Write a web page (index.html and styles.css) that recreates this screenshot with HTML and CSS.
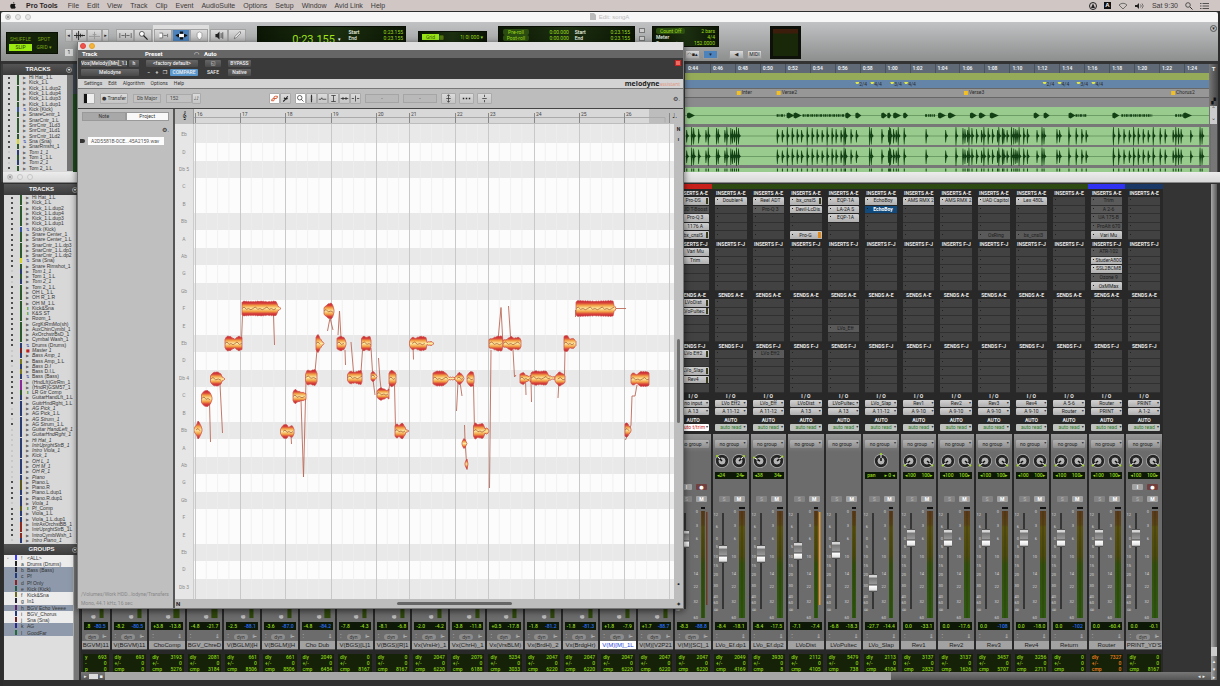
FILE: index.html
```html
<!DOCTYPE html>
<html lang="en">
<head>
<meta charset="utf-8">
<title>Pro Tools</title>
<link rel="stylesheet" href="styles.css">
</head>
<body>
<header class="menubar">
  <svg class="apple" viewBox="0 0 14 16" aria-label="Apple"><path d="M10 0c0 2-1.400 3.500-3 3.500C7 1.700 8.300.3 10 0zM7.200 4.600c.7 0 1.500-.8 2.900-.8 1.100 0 2.200.6 2.900 1.600-2.500 1.500-2.100 5 .5 6.100-.7 2-2 4-3.400 4-1.100 0-1.400-.7-2.800-.7s-1.800.7-2.900.7C2.500 15.500.5 11.800.5 8.900c0-3 1.900-5 4.100-5 1.100 0 2 .7 2.600.7z"/></svg>
  <nav class="menus"><b>Pro Tools</b><span>File</span><span>Edit</span><span>View</span><span>Track</span><span>Clip</span><span>Event</span><span>AudioSuite</span><span>Options</span><span>Setup</span><span>Window</span><span>Avid Link</span><span>Help</span></nav>
  <div class="status">
    <svg width="8" height="8" viewBox="0 0 8 8"><circle cx="4" cy="4" r="3.500" fill="none" stroke="#222"/><path d="M4 1.500 6 6H2z" fill="#222"/></svg>
    <span class="abox">A</span>
    <svg width="10" height="8" viewBox="0 0 10 8"><path d="M1 3q4-3.500 8 0L5 7z" fill="none" stroke="#555" stroke-width=".8"/></svg>
    <svg width="10" height="8" viewBox="0 0 10 8"><path d="M0 3h2l2-2v6L2 5H0z" fill="#222"/><path d="M5.500 2.500q1.500 1.500 0 3M7 1.500q2.500 2.500 0 5" fill="none" stroke="#555" stroke-width=".8"/></svg>
    <span>Sat 9:30</span>
    <svg width="8" height="8" viewBox="0 0 8 8"><circle cx="3" cy="3" r="2.300" fill="none" stroke="#333" stroke-width=".8"/><path d="m5 5 2.500 2.500" stroke="#333"/></svg>
    <svg width="9" height="8" viewBox="0 0 9 8"><path d="M2.500 1.500H9M2.500 4H9M2.500 6.500H9M0 1.500h1.500M0 4h1.500M0 6.500h1.500" stroke="#333" stroke-width=".8"/></svg>
  </div>
</header>

<main class="desktop">
  <section class="edit">
    <div class="titlebar white"><i class="dot x"></i><i class="dot"></i><i class="dot"></i><h1><svg width="6" height="7" viewBox="0 0 6 7"><path d="M0 0h4l2 2v5H0z" fill="#bbb"/></svg>Edit: songA</h1></div>
    <div class="toolbar">
      <div class="modes"><span>SHUFFLE</span><span>SPOT</span><span class="on">SLIP</span><span>GRID ▾</span></div>
      <div class="toolcol">
        <div class="tools">
          <button aria-label="Zoom out">◂</button><button aria-label="Audio zoom"><svg viewBox="0 0 12 12"><path d="M0 6h12M3 3v6M5 1v10M7 4v4M9 5v2" stroke="#222"/></svg></button><button aria-label="MIDI zoom"><svg viewBox="0 0 12 12"><path d="M0 7h12M6 2v8M4 5h4" stroke="#999"/></svg></button><button aria-label="Zoom in">▸</button>
        </div>
        <button class="mini">1</button>
      </div>
      <div class="tools big">
        <button aria-label="Trim view"><svg viewBox="0 0 16 12"><path d="M1 3v6M15 3v6M8 3v6M3 6h4M9 6h4" stroke="#555"/></svg></button>
        <button aria-label="Zoomer"><svg viewBox="0 0 16 12"><circle cx="6" cy="4" r="3" fill="#fff" stroke="#444"/><path d="m8 6 5 5" stroke="#222" stroke-width="1.500"/></svg></button>
      </div>
      <div class="tools big smart">
        <button aria-label="Trimmer"><svg viewBox="0 0 16 12"><path d="M3 3h4v6H3M13 4v4M8 6h4" stroke="#666" fill="#fff"/></svg></button>
        <button class="sel" aria-label="Selector"><svg viewBox="0 0 16 12"><path d="M1 6h14M4 4v4M7 1v10M9 1v10M12 4v4" stroke="#111" stroke-width="2"/><path d="M5 4h6v4H5z" fill="#fff"/></svg></button>
        <button aria-label="Grabber"><svg viewBox="0 0 16 12"><path d="M5 3q3-3 6 0v4l-2 4H7L5 7z" fill="#fff" stroke="#999"/></svg></button>
      </div>
      <div class="tools big">
        <button aria-label="Scrubber"><svg viewBox="0 0 16 12"><path d="M3 4h2l3-3v10L5 8H3z" fill="#222"/><path d="M10 3v6M12 2v8" stroke="#444"/></svg></button>
        <button aria-label="Pencil"><svg viewBox="0 0 16 12"><path d="m4 10 1-3 6-6 1 2-6 6z" fill="#fff" stroke="#666"/></svg></button>
      </div>
      <div class="lcd counter"><strong>0:23.155</strong><em>▾</em><div><b>Start</b><b>End</b></div><div class="r"><span>0:23.155</span><span>0:23.155</span></div></div>
      <div class="lcd gridbox"><span class="on">Grid</span><i>▥</i><span class="push">1| 0| 000 ▾</span></div>
      <div class="lcd roll"><div><span class="pill">Pre-roll</span><span class="pill">Post-roll</span></div><div class="r"><span>0:00.000</span><span>0:00.000</span><span>0:10.000</span></div><div><b>Start</b><b>End</b><b>Length</b></div><div class="r"><span>0:23.155</span><span>0:23.155</span><span>0:00.000</span></div></div>
      <div class="checks"><i></i><i></i></div>
      <div class="tempo">
        <div class="lcd meterbox"><div><span class="pill">Count Off</span><b>Meter</b><b>Tempo &nbsp; ♩▾</b></div><div class="r"><span>2 bars</span><span>4/4</span><span>152.0000</span></div></div>
        <div class="minis"><button aria-label="Metronome">◠▪▴</button><button class="sel" aria-label="MIDI merge">▾</button><button aria-label="Count">◀</button><button>MIDI</button></div>
      </div>
      <div class="vu"></div>
      <span class="round">▾</span>
    </div>
    <div class="editbody">
      <aside class="list-panel"><h2>TRACKS<i>▾</i></h2><ul class="tracks" id="edit-tracks"></ul></aside>
      <div class="sliver"></div>
      <div class="timeline">
        <div class="times" id="times"></div>
        <svg id="lanes" class="lanes" viewBox="684 73 526 99" preserveAspectRatio="none" role="img" aria-label="Timeline"></svg>
      </div>
      <div class="edge"><b>T</b><i>▞</i><span>⌃</span><span>⌄</span><u></u></div>
    </div>
  </section>

  <section class="mix">
    <div class="titlebar grey"><i class="dot x"></i><i class="dot"></i><i class="dot"></i></div>
    <div class="mixbody">
      <aside class="list-panel">
        <h2>TRACKS<i>▾</i></h2>
        <ul class="tracks" id="mix-tracks"></ul>
        <h2 class="second">GROUPS<i>▾</i></h2>
        <ul class="groups" id="groups"></ul>
      </aside>
      <div class="mixer">
        <div class="strips" id="strips"></div>
        <div class="hscroll"><span>▸</span><b></b><span>▪</span><div class="thumb"></div><span>◂</span><span>▸</span></div>
      </div>
      <div class="vscroll"><i></i><span>▴</span><span>▾</span><span>▸</span></div>
    </div>
  </section>

  <section class="melodyne">
    <div class="mtitle"><i class="dot red"></i><i class="dot yellow"></i></div>
    <div class="mhead"><b>Track</b><b>Preset</b><i>◠</i><b>Auto</b></div>
    <div class="mctrl">
      <div class="c1"><button>Vox(Melody)[Mn]_1.L</button><button>h</button><button class="wide">Melodyne</button></div>
      <div class="c2"><button class="wide">&lt;factory default&gt;</button><span>−</span><span>+</span><span>❐</span><button class="cmp">COMPARE</button></div>
      <div class="c3"><button aria-label="Automation">◱</button><span>SAFE</span></div>
      <div class="c3"><button>BYPASS</button><button>Native</button></div>
      <i class="redbox"></i>
    </div>
    <nav class="mmenu"><span>Settings</span><span>Edit</span><span>Algorithm</span><span>Options</span><span>Help</span><p><strong>melodyne</strong><em>assistant</em></p></nav>
    <div class="mtools">
      <button class="view" aria-label="Toggle list"><i></i></button>
      <button class="transfer">● Transfer</button>
      <span class="field key">Db Major</span>
      <span class="field bpm">152</span>
      <button class="small" aria-label="Tempo">♩♪</button>
      <div class="pair">
        <button class="act" aria-label="Link"><svg viewBox="0 0 12 12"><path d="M2 9q0-3 3-3h2M5 6h3q2 0 2-3H7q-2 0-2 3M2 9h3l1-3" fill="none" stroke="#d4603c" stroke-width="1.300"/></svg></button>
        <button aria-label="Unlink"><svg viewBox="0 0 12 12"><path d="m3 10 3-3 3-4M6 7l3-1M6 7 4 5" fill="none" stroke="#222" stroke-width="1.500"/></svg></button>
      </div>
      <div class="pair">
        <button class="act" aria-label="Main tool"><svg viewBox="0 0 12 12"><circle cx="5" cy="5" r="3" fill="none" stroke="#333"/><path d="m7 7 3 3" stroke="#333"/></svg></button>
        <button aria-label="Pitch"><svg viewBox="0 0 12 12"><path d="M6 1v10M5 4h2M5 7h2" stroke="#333" stroke-width="1.500"/></svg></button>
        <button aria-label="Vibrato"><svg viewBox="0 0 12 12"><path d="M1 7h3l1-2 1 2h5" fill="none" stroke="#333"/></svg></button>
        <button aria-label="Amplitude"><svg viewBox="0 0 12 12"><path d="M3 2h6M6 2v8M3 10h6" stroke="#333"/></svg></button>
        <button aria-label="Time"><svg viewBox="0 0 12 12"><path d="M1 6h10M4 4v4M8 4v4" stroke="#222"/></svg></button>
        <button aria-label="Separate"><svg viewBox="0 0 12 12"><path d="M1 6h3M8 6h3M6 2v8" stroke="#333"/></svg></button>
      </div>
      <span class="field slot">-</span><span class="field slot">-</span>
      <button class="mac" aria-label="Correct pitch"><svg viewBox="0 0 12 12"><path d="M6 1v10M3 6h6M4 3l2-2 2 2M4 9l2 2 2-2" fill="none" stroke="#333"/></svg></button>
      <button class="mac" aria-label="Quantize time"><svg viewBox="0 0 12 12"><path d="M1 6h2M5 6h2M9 6h2" stroke="#222" stroke-width="2"/></svg></button>
      <button class="mac" aria-label="Level"><svg viewBox="0 0 12 12"><path d="M6 1v3M3 6h6M6 8v3" stroke="#333"/></svg></button>
      <span class="gear">⚙.</span>
    </div>
    <div class="mbody">
      <aside class="mside">
        <div class="tabs"><button>Note</button><button class="act">Project</button></div>
        <span class="sgear">⚙.</span>
        <div class="file"><i></i><span>A2D5581B-0CE...45A2159.wav</span></div>
        <footer><p>/Volumes/Work HDD...lodyne/Transfers</p><p>Mono, 44.1 kHz, 16 sec</p></footer>
      </aside>
      <div class="meditor">
        <div class="clef">𝄞</div>
        <svg class="ruler" viewBox="194 110 480 14" id="ruler" role="img" aria-label="Bars"></svg>
        <div class="rtop">♩.</div>
        <div class="pitches" id="pitches"></div>
        <div class="canvas"><div class="bands" id="bands"></div><svg id="notes" viewBox="194 124 480 475" role="img" aria-label="Notes"></svg></div>
        <div class="mvs"><span>N</span><span>ı</span><i></i><b>•</b></div>
        <div class="mhs"><span>N</span><i></i><span>⌖</span></div>
      </div>
    </div>
  </section>
</main>
<script src="app.js"></script>
</body>
</html>
```
FILE: styles.css
```css
* { box-sizing: border-box; }
body { margin: 0; height: 100vh; display: flex; flex-direction: column; overflow: hidden; background: #2d2d2e; font: 5px/1 "Roboto", "DejaVu Sans", sans-serif; color: #222; }
button { font: inherit; padding: 0; margin: 0; border: 0; color: inherit; white-space: nowrap; overflow: hidden; line-height: 1; }
h1, h2, p, ul { margin: 0; padding: 0; list-style: none; font-size: inherit; }
i, em { font-style: normal; }
svg { display: block; flex: none; }

.menubar { flex: none; height: 11px; display: flex; align-items: center; background: #d0c7c5; font: 7px/10px "Liberation Sans", sans-serif; color: #3c3838; padding: 0 11px 0 10px; }
.apple { width: 6px; height: 7px; fill: #151515; margin-right: 10px; }
.menus { display: flex; gap: 8px; flex: 1; }
.menus b { color: #2a2626; margin-right: 2px; }
.status { display: flex; align-items: center; gap: 7px; }
.abox { background: #111; color: #fff; font: bold 6px/7px "Liberation Sans", sans-serif; width: 7px; text-align: center; }

.desktop { position: relative; flex: 1; min-height: 0; }
.titlebar { height: 10px; display: flex; align-items: center; gap: 4px; padding: 0 4px; flex: none; position: relative; }
.white { background: #f7f7f7; border-radius: 2px 2px 0 0; }
.grey { background: linear-gradient(#ececec, #d9d9d9); height: 11px; border-bottom: 1px solid #888; }
.titlebar h1 { flex: 1; display: flex; justify-content: center; gap: 3px; font: 6px/8px "Liberation Sans", sans-serif; color: #bdbdbd; margin-right: 30px; }
.dot { width: 6px; height: 6px; border-radius: 50%; background: #e6e6e6; border: 1px solid #c6c6c6; flex: none; }
.dot.x { box-shadow: inset 0 0 0 1px #ddd; background: #888; }
.dot.red { background: #f0554c; border-color: #e0443c; }
.dot.yellow { background: #f5b63c; border-color: #e3a22c; }

/* Edit window */
.edit { position: absolute; left: 1px; right: 2px; top: 1px; height: 170px; display: flex; flex-direction: column; background: #3a3c3e; }
.toolbar { height: 41px; flex: none; display: flex; align-items: flex-start; padding: 3px 1px 0 5px; background: linear-gradient(#c0c2c3, #8d8f8f); border-bottom: 2px solid #333; }
.modes { width: 52px; height: 22px; margin: 7px 7px 0 0; background: #15220a; border: 1px solid #0b1004; padding: 3px 2px; display: grid; grid-template-columns: 23px 1fr; gap: 1px; color: #79a512; text-align: center; line-height: 7px; }
.modes .on { background: #9bea12; color: #263c05; }
.toolcol { margin-right: 7px; }
.tools { display: flex; margin-top: 4px; }
.tools button { height: 13px; background: linear-gradient(#dcdcdc, #b4b4b4); border: 1px solid #a2a2a2; width: 15px; display: grid; place-items: center; }
.tools button:first-child:not([aria-label="Trimmer"]), .tools button[aria-label="Zoom in"] { width: 7px; }
.tools svg { width: 13px; height: 11px; }
.tools.big button, .tools.big button:first-child { width: 18px; }
.tools.smart { background: #dedede; margin: 0 1px; padding: 4px 1px 3px; }
.tools .sel, .minis .sel { background: #4c83bd; }
.mini { width: 8px; height: 7px; background: #d4d4d4; margin-top: 7px; }
.lcd { background: linear-gradient(90deg, #0c1605, #1c3010 50%, #0c1605); border: 1px solid #0a0f06; color: #9ede18; display: flex; font-size: 5px; line-height: 6px; padding: 2px 4px; flex: none; }
.lcd b { color: #ecf5e4; font-weight: 500; display: block; white-space: nowrap; }
.lcd span { display: block; white-space: nowrap; }
.lcd .r { text-align: right; margin-left: auto; }
.lcd .pill { background: #2c4d10; border-radius: 2px; padding: 0 4px; text-align: center; }
.counter { width: 149px; height: 24px; margin: 1px 12px 0 11px; align-items: flex-start; padding-right: 2px; }
.counter strong { flex: none; width: 73px; text-align: right; font: 11px/18px "Roboto", sans-serif; color: #a5e61c; margin-top: 2px; }
.counter em { color: #fff; margin: 7px 8px 0 3px; }
.gridbox { width: 69px; height: 15px; margin: 6px 11px 0 0; padding: 2px 3px; }
.gridbox .on { background: #98e616; color: #3e6510; width: 17px; height: 6px; text-align: center; }
.gridbox .push { margin-left: auto; }
.roll { width: 137px; height: 24px; margin: 1px 4px 0 0; overflow: hidden; gap: 6px; }
.roll .pill { width: 26px; padding: 0 2px; }
.checks i { display: block; width: 6px; height: 5px; border: 1px solid #777; background: #ccc; margin-top: 3px; }
.tempo { margin: 1px 11px 0 7px; width: 107px; flex: none; }
.meterbox { width: 67px; height: 21px; padding: 1px 3px; overflow: hidden; }
.minis { display: flex; gap: 3px; margin: 3px 0 0 33px; }
.minis button { width: 15px; height: 9px; background: linear-gradient(#dadada, #aaa); border: 1px solid #999; flex: none; }
.minis button:nth-child(3) { margin-left: 8px; }
.vu { width: 31px; height: 33px; margin-top: 1px; background: linear-gradient(#3c1d0c 4px, #182808 5px); border: 3px solid #0e1109; flex: none; }
.round { margin-left: auto; width: 7px; height: 7px; border: 1px solid #555; border-radius: 50%; text-align: center; line-height: 5px; }
.editbody { flex: 1; display: flex; min-height: 0; padding-left: 2px; border-top: 1px solid #333; }

.list-panel { width: 70px; flex: none; display: flex; flex-direction: column; background: #d6d6d6; overflow: hidden; }
.list-panel h2 { flex: none; height: 11px; background: linear-gradient(#555, #3c3c3c); color: #f3f3f3; font: bold 6px/11px "Liberation Sans", sans-serif; text-align: center; position: relative; }
.list-panel h2 i { position: absolute; right: 1px; top: 3px; width: 6px; height: 6px; border: 1px solid #999; border-radius: 50%; font-size: 4px; line-height: 4px; }
.tracks { background: #d8d8d8; border-right: 6px solid #757575; display: grid; }
.tracks li { display: grid; grid-template-columns: 10px 6px 6px 1fr; align-items: center; padding-left: 4px; font: 5px/5px "Liberation Sans", sans-serif; color: #333; white-space: nowrap; overflow: hidden; }
.tracks li i { width: 2px; height: 2px; border-radius: 50%; background: #222; margin-left: 1px; }
.tracks li u { width: 2px; height: 5px; }
.tracks li s { text-decoration: none; font: 4px/5px "DejaVu Sans", sans-serif; }
.tracks .off { font-style: italic; }
.tracks .off i { background: #c2c2c2; }
#edit-tracks { grid-auto-rows: calc(100% / 18); height: 96px; }
.sliver { width: 5px; background: #1d4a1c; border-top: 30px solid #39424c; }
.timeline { flex: 1; min-width: 0; display: flex; flex-direction: column; margin-left: 607px; }
.times { height: 9px; display: grid; grid-template-columns: repeat(21, 1fr); background: #606a76; color: #e8ecf0; font: bold 5px/9px "Roboto", sans-serif; }
.times span { border-left: 1px solid #4a525c; padding-left: 2px; }
.lanes { width: 100%; height: 99px; }
.lanes text { font: 5px "Roboto", sans-serif; fill: #2b2b2b; }
.edge { width: 9px; background: linear-gradient(90deg, #777, #444); color: #eee; display: flex; flex-direction: column; align-items: center; font-size: 6px; padding-top: 2px; }
.edge i { margin: 26px 0 2px; color: #111; }
.edge span { background: #ccc; color: #444; width: 7px; height: 9px; text-align: center; }
.edge u { flex: 1; width: 6px; background: #777; }

/* Mix window */
.mix { position: absolute; left: 3px; right: 0; top: 161px; bottom: 0; display: flex; flex-direction: column; background: #303030; padding-bottom: 6px; }
.mixbody { flex: 1; min-height: 0; display: flex; padding-top: 1px; }
.mix .list-panel { width: 75px; margin: 0 2px 0 1px; }
.mix .tracks { height: 348px; grid-auto-rows: 1fr; border-right: 3px solid #888; padding-left: 2px; }
.list-panel .second { margin-top: 1px; }
.groups { flex: 1; background: linear-gradient(90deg, #dedede 69px, #777 70px); }
.groups li { height: 6px; margin: 0 6px 0 0; display: grid; grid-template-columns: 4px 5px 8px 1fr; gap: 1px; padding-left: 3px; font: 5px/6px "Liberation Sans", sans-serif; color: #333; background: #ececec; white-space: nowrap; overflow: hidden; }
.groups li.sel { background: #8e9aab; }
.groups li:nth-child(4n) { height: 7px; }
.groups li u { width: 2px; height: 5px; justify-self: end; }
.groups li b { font-weight: normal; padding-left: 3px; }
.mixer { flex: 1; min-width: 0; display: flex; flex-direction: column; overflow: hidden; background: #343434; }
.strips { flex: 1; min-height: 0; display: grid; grid-template-columns: repeat(29, minmax(0, 1fr)); margin: 0 48px 0 -8px; background: #282828; }
.hscroll { height: 8px; flex: none; background: linear-gradient(#777, #555); display: flex; align-items: center; gap: 2px; color: #eee; padding: 0 6px 0 3px; }
.hscroll b { width: 9px; height: 5px; background: #ddd; }
.hscroll .thumb { width: 786px; flex: none; height: 8px; background: #a6a6a6; margin-right: auto; }
.vscroll { width: 6px; margin-right: 3px; background: linear-gradient(90deg, #a9a9a9, #5a5a5a); display: flex; flex-direction: column; justify-content: flex-end; align-items: center; color: #eee; gap: 3px; }
.vscroll i { width: 6px; height: 9px; background: #ccc; }
.strip { display: flex; flex-direction: column; justify-content: flex-end; padding: 0 1px; min-width: 0; overflow: hidden; text-align: center; }
.strip.first { padding-left: 9px; }
.color { height: 5px; margin: 0 -1px; flex: none; }
.block { height: 51px; display: grid; grid-template-rows: 8px repeat(5, minmax(0, 1fr)); padding: 0 2px; }
.cap { color: #e9e9e9; font-weight: 700; font-size: 5px; line-height: 8px; white-space: nowrap; margin: 0 -3px; }
.slot { display: flex; align-items: center; gap: 1px; background: #424242; border: 1px solid #303030; border-width: 0 0 1px; color: #1c1c1c; text-align: center; }
.slot::before { content: ""; width: 1px; height: 1px; background: #202020; margin: -2px 0 0 2px; flex: none; }
.slot span { flex: 1; overflow: hidden; }
.slot.on { background: linear-gradient(#cfcfcf, #b0b0b0); border-radius: 1px; border: 1px solid #242424; border-width: 0 0 1px; }
.slot.dim { background: #5a5a5a; }
.slot.blue { background: #124a7c; color: #fff; font-weight: 700; }
.slot em { width: 2px; height: 6px; background: #3a3a1c; margin-right: 1px; }
.slot em.hot { background: #e08a1c; width: 3px; }
.io { padding: 0 2px; }
.io .cap { line-height: 7px; }
.io .auto-cap { line-height: 8px; }
.io button { display: block; width: 100%; height: 7px; margin-bottom: 1px; background: linear-gradient(#d2d2d2, #aeaeae); border-radius: 1px; position: relative; }
.io button.auto { color: #2f7a2a; background: #bfc3bf; }
.io button.touch { color: #d02828; background: #fff; }
.caret::after { content: "▾"; position: absolute; right: 1px; top: 1px; font-size: 4px; line-height: 4px; color: #333; }
.body { background: #6c6c6c; margin-top: 2px; flex: none; }
.grp { height: 18px; padding: 6px 2px 4px; background: linear-gradient(#979797, #6c6c6c); }
.grp button { width: 100%; height: 8px; background: linear-gradient(#b2b2b2, #8f8f8f); border-radius: 1px; position: relative; padding-right: 3px; }
.pan { height: 28px; }
.knobs { height: 20px; display: flex; justify-content: center; gap: 1px; padding-top: 1px; }
.knobs svg { width: 16px; height: 16px; }
.read { height: 7px; margin: 0 2px; background: #0d1806; color: #97dc1a; display: flex; justify-content: space-between; padding: 0 2px; line-height: 7px; font-weight: 500; white-space: nowrap; }
.rec, .sm { display: flex; justify-content: flex-end; align-items: center; gap: 4px; padding-right: 4px; }
.rec { height: 14px; }
.sm { height: 10px; }
.rec button, .sm button { width: 11px; height: 6px; border-radius: 1px; background: #a2a2a2; color: #fff; font-weight: 700; }
.rec button:last-child { background: #71403e; }
.sm button:first-child { background: #838383; color: #aaa; }
.fader { position: relative; height: 116px; }
.fader svg { width: 35px; height: 116px; }
.fader text, .tail text { font: 4px "Roboto", sans-serif; fill: #d6d6d6; }
.fader input { position: absolute; left: 6px; top: 9px; width: 8px; height: 96px; margin: 0; appearance: none; -webkit-appearance: none; background: linear-gradient(90deg, transparent 3px, #353535 3px, #353535 5px, transparent 5px); writing-mode: vertical-lr; direction: rtl; }
.fader input::-webkit-slider-thumb { -webkit-appearance: none; width: 8px; height: 18px; border: 1px solid #555; border-width: 1px 0; background: linear-gradient(#d5d5d5 2px, #777 3px, #999 9px, #444 10px, #fff 11px, #e2e2e2 15px, #888); }
.tail svg { width: 100%; height: 11px; }
.tail.body { margin: 0; }
.vol { height: 12px; padding-top: 2px; }
.vol .read { height: 8px; line-height: 8px; }
.vol .bl { color: #2672ff; }
.dyn { height: 9px; display: flex; align-items: center; justify-content: space-between; padding: 0 3px; color: #ddd; }
.dyn b { background: #8d8d8d; color: #333; font-weight: 400; width: 14px; height: 6px; line-height: 6px; border-radius: 3px; font-size: 5px; }
.name { height: 9px; background: #a2a2a2; color: #1c1c1c; font: 6px/9px "Liberation Sans", sans-serif; white-space: nowrap; overflow: hidden; border-bottom: 1px solid #555; }
.name.sel { background: #fff; color: #2745e0; }
.dly { flex: none; height: 18px; margin: 4px 1px 0; padding: 0 2px; background: #152208; color: #8ed01a; display: grid; grid-template-columns: auto 1fr; line-height: 6px; text-align: left; font-weight: 500; }
.dly span:nth-child(even) { text-align: right; }
.dly.hot { color: #f08020; }

/* Melodyne plug-in window */
.melodyne { position: absolute; left: 77px; top: 31px; width: 607px; height: 567px; display: flex; flex-direction: column; background: #bdbdbd; box-shadow: 0 2px 7px rgba(0,0,0,.6); border: 1px solid #777; border-top: 0; overflow: hidden; }
.mtitle { height: 8px; background: #e0e0e0; display: flex; gap: 3px; padding: 1px 2px; flex: none; }
.mhead { height: 8px; flex: none; background: #666; color: #fff; display: grid; grid-template-columns: 63px 49px 10px 1fr; padding-left: 4px; font-size: 6px; line-height: 8px; }
.mctrl { height: 21px; flex: none; background: #3a3a3a; color: #eee; display: flex; gap: 7px; padding: 2px 3px; position: relative; font-weight: 500; }
.mctrl button { height: 7px; background: linear-gradient(#666, #494949); border-radius: 1px; }
.mctrl > div { display: flex; flex-wrap: wrap; gap: 2px; align-content: flex-start; align-items: center; }
.c1 { width: 58px; }
.c1 button:first-child { width: 46px; }
.c1 button:nth-child(2) { width: 10px; }
.mctrl .wide { width: 100%; }
.c2 { width: 52px; }
.c2 span { width: 6px; text-align: center; }
.mctrl .cmp { flex: 1; background: #5a97cc; }
.mctrl .c3 { width: 16px; flex-direction: column; flex-wrap: nowrap; align-items: stretch; text-align: center; }
.c3 span { line-height: 7px; }
.mctrl .c3 + .c3 { width: 23px; }
.redbox { position: absolute; right: 2px; top: 2px; width: 6px; height: 6px; background: #f16a62; border: 1px solid #c22; }
.mmenu { height: 10px; flex: none; background: #d3d3d3; display: flex; gap: 6px; align-items: center; padding: 0 3px 0 6px; font: 5px/9px "Roboto", sans-serif; color: #333; border-bottom: 1px solid #777; }
.mmenu p { margin-left: auto; display: flex; }
.mmenu strong { font: bold 7px/9px "Open Sans", sans-serif; color: #222; }
.mmenu em { font: 5px/10px "Open Sans", sans-serif; color: #e0917a; }
.mtools { height: 20px; flex: none; display: flex; align-items: center; padding: 0 3px 0 5px; border-bottom: 1px solid #444; color: #333; }
.mtools button { height: 11px; background: linear-gradient(#dcdcdc, #c4c4c4); border: 1px solid #aaa; border-radius: 1px; display: grid; place-items: center; flex: none; }
.mtools svg { width: 9px; height: 9px; }
.mtools .view { width: 12px; background: linear-gradient(90deg, #111 3px, #eee 3px); }
.mtools .transfer { width: 28px; margin: 0 5px; font-size: 5px; }
.field { border: 1px solid #aaa; height: 9px; line-height: 7px; background: #c2c2c2; font-size: 5px; color: #444; padding: 0 3px; flex: none; }
.key { width: 28px; margin-right: 5px; white-space: nowrap; }
.bpm { width: 26px; }
.mtools .small { width: 9px; margin-right: 68px; }
.pair { display: flex; margin-right: 4px; }
.pair button { width: 11px; }
.mtools .act { background: #fff; }
.field.slot { width: 34px; margin-right: 4px; display: block; background: #b9b9b9; border: 1px solid #a5a5a5; }
.field.slot::before { display: none; }
.mtools .mac { width: 15px; margin-right: 3px; }
.gear { margin-left: auto; font-size: 6px; }
.mbody { flex: 1; display: flex; min-height: 0; }
.mside { width: 97px; flex: none; border-right: 2px solid #555; background: #bfbfbf; display: flex; flex-direction: column; padding-top: 3px; }
.tabs { display: flex; margin: 0 4px; }
.tabs button { flex: 1; height: 9px; background: #a8a8a8; border: 1px solid #999; color: #333; font-size: 5px; }
.tabs .act { background: #f8f8f8; }
.sgear { font-size: 6px; text-align: right; margin: 5px 4px 4px; line-height: 7px; }
.file { display: flex; align-items: center; gap: 4px; height: 8px; margin: 0 9px 0 2px; background: linear-gradient(90deg, transparent 8px, #fcfcfc 8px); color: #555; white-space: nowrap; }
.file i { width: 5px; height: 4px; background: #333; border-radius: 0 2px 2px 0; margin-right: 2px; }
.mside footer { margin-top: auto; padding: 0 2px 0 3px; font-size: 5px; line-height: 9px; color: #888; white-space: nowrap; }
.meditor { flex: 1; min-width: 0; display: grid; grid-template-columns: 19px minmax(0, 1fr) 9px; grid-template-rows: 15px minmax(0, 1fr) 9px; }
.clef { text-align: center; font-size: 8px; line-height: 14px; border-right: 1px solid #999; }
.ruler { width: 480px; height: 14px; background: #d8d8d8; }
.ruler text { font: 5px "Roboto", sans-serif; fill: #444; }
.rtop { font-size: 7px; line-height: 14px; margin-left: -2px; }
.pitches, .bands { display: grid; grid-template-rows: repeat(27, minmax(0, 1fr)); padding: 2px 0 3px; }
.pitches { background: #e6e6e6; border-right: 1px solid #ccc; }
.pitches span { display: grid; place-items: center; color: #8c8c8c; font-size: 5px; }
.canvas { display: grid; background: #e9e9e9; overflow: hidden; }
.canvas > * { grid-area: 1 / 1; }
.bands i { background: #fcfcfc; }
.bands i.k { background: #e9e9e9; }
#notes { width: 480px; height: 100%; }
.mvs { display: flex; flex-direction: column; align-items: center; gap: 5px; padding-top: 3px; font: bold 5px/5px "Roboto", sans-serif; }
.mvs i { width: 3px; height: 84px; border-radius: 2px; background: #6f6f6f; margin-top: 192px; }
.mvs b { margin-top: auto; padding-bottom: 12px; font-size: 8px; }
.mhs { grid-column: 1 / -1; display: flex; justify-content: space-between; align-items: center; padding: 0 3px 0 1px; font: bold 6px/6px "Roboto", "DejaVu Sans", sans-serif; }
.mhs i { width: 115px; height: 3px; border-radius: 2px; background: #666; margin-left: 51px; }
```
FILE: app.js
```js
const $ = id => document.getElementById(id);

/* Track lists. Prefix: . inactive, + aux, v VCA, m master; suffix after | is the colour. */
const trackNames = `Hi Hat_1.L;Kick_1.L;Kick_1.L.dup2;Kick_1.L.dup4;Kick_1.L.dup3;Kick_1.L.dup1;vKick (Kick)|#34559a;Snare Center_1;Snare Center_1.L;SnarCntr_1.L.dp3;SnarCntr_1.L.dp1;SnarCntr_1.L.dp2;vSna (Sna)|#d6d62a;Snare Rimshot_1;.Tom 1_1|#2a3c72;Tom 1_1.L;.Tom 2_1|#2a3c72;Tom 2_1.L;OH L_1.L;OH R_1.R;OH M_1.L;+Kick&Sna;+K&S ST;Room_1;GrgKtRmMo(sh);AuxChinCymbl_1;AxOrchstrBsD_1;Cymbal Wash_1;vDrums (Drums)|#2a3c72;mMaster 1|#7c2020;.Bass Amp_1|#2a3c72;Bass Amp_1.L|#7a7a20;.Bass D.I|#2a3c72;Bass D.I.L|#7a7a20;vBass (Bass)|#2a3c72;(HndLft)GtrRm_1|#8a2a9a;(HndR)GSM57_1|#8a2a9a;+LR Gtr Comp;GuitarHandLft_1.L|#2a3c72;GuitrHndRght_1.L|#2a3c72;.AG Pick_1|#2a3c72;AG Pick_1.L|#2a3c72;.AG Strum_1|#2a3c72;AG Strum_1.L|#2a3c72;.Guitar HandLeft_1|#2a3c72;.GuitarHndRght_1|#2a3c72;.Hi Hat_1|#2a3c72;.IntrUprghtStrB_1|#2a3c72;.Intro Viola_1|#2a3c72;.Kick_1|#2a3c72;.OH L_1|#2a3c72;.OH M_1|#2a3c72;.OH R_1|#2a3c72;.Piano|#2a3c72;Piano.L|#5a5a20;Piano.R|#5a5a20;Piano.L.dup1|#2a3c72;Piano.R.dup1|#2a3c72;.Viola_1|#2a3c72;+Pf_Comp|#5a5a20;Viola_1.L|#2a3c72;Viola_1.L.dup1|#2a3c72;IntrAxOrchstBB_1|#8a2a20;IntrUprghtStrB_1L|#8a2a20;IntroCymblWsh_1|#8a2a20;.Intro Piano_1|#2a3c72`.split(';');
const editNames = `Hi Hat_1.L;Kick_1.L;Kick_1.L.dup2;Kick_1.L.dup4;Kick_1.L.dup3;Kick_1.L.dup1;vKick (Kick)|#34559a;SnareCentr_1;SnarCntr_1.L;SnrCntr_1Ld3;SnrCntr_1Ld1;SnrCntr_1Ld2;vSna (Sna)|#d6d62a;SnarRmsht_1;.Tom 1_1|#2a3c72;Tom 1_1.L;.Tom 2_1|#2a3c72;Tom 2_1.L`.split(';');
const glyph = { '+': ['⬇', '#1c9a2c'], v: ['⇅', '#2233aa'], m: ['■', '#c02020'] };
const trackRow = t => {
  let [n, c = '#2c5a2c'] = t.split('|');
  const k = '.+vm'.includes(n[0]) ? n[0] : '';
  if (k) n = n.slice(1);
  const [g, gc] = glyph[k] || ['▶', '#666'];
  const off = k === '.' || k === 'm';
  return `<li class="${off ? 'off' : ''}"><i></i><u style="background:${c}"></u><s style="color:${gc}">${g}</s>${n.replace('&', '&amp;')}</li>`;
};
$('mix-tracks').innerHTML = trackNames.map(trackRow).join('');
$('edit-tracks').innerHTML = editNames.map(trackRow).join('');

$('groups').innerHTML = [['!', '&lt;ALL&gt;', '#3a3aff'], ['a', 'Drums (Drums)', '#222'], ['b', 'Bass (Bass)', '#223', 1], ['c', 'Pf', '#223a7a', 1], ['d', 'Pf Only', '#8a2222', 1], ['e', 'Kick (Kick)', '#225a4a', 1], ['f', 'Kick&amp;Sna', '#6a6a22'], ['g', 'In1', '#223'], ['h', 'BGV Echo Veeee', '#5a226a', 1], ['i', 'BGV_Chorus', '#223a7a'], ['j', 'Sna (Sna)', '#6a2222'], ['k', 'AG', '#2a2a8a', 1], ['l', 'GoodFar', '#226a3a', 1]]
  .map(([k, n, c, s]) => `<li class="${s ? 'sel' : ''}"><span>${k === '!' ? '◦' : ''}</span><u style="background:${c}"></u><b>${k}</b><span>${n}</span></li>`).join('');

/* Timeline */
$('times').innerHTML = Array.from({ length: 21 }, (_, i) => {
  const s = 44 + i * 2;
  return `<span>${Math.floor(s / 60)}:${String(s % 60).padStart(2, '0')}</span>`;
}).join('');
const a = [857, 872, 878, 893, 915, 922, 947, 952, 972, 978, 990, 995, 1001, 1007, 1013, 1130, 1145, 1160, 1175, 1190].map(v => 400 + v / 3);
const b = [3, 20, 35, 50, 65, 80, 95, 107, 122, 131, 135, 152, 168, 208, 213, 245, 265, 268, 271, 280, 288, 294, 312, 378, 437, 468, 489, 495, 503, 507, 516, 530, 545, 552, 565, 578, 593, 597, 608, 612, 622, 635, 642, 648, 652, 658, 672, 683, 712, 727, 733, 772, 780, 808, 830, 847, 860, 942, 958, 974, 990, 1003, 1017, 1032, 1047, 1062, 1083, 1098, 1122, 1130, 1138, 1146, 1175, 1203, 1209].map(v => 800 + v / 3);
const hits = a.concat(b);
const spike = (x, y, h) => `<path d="M${x - .8} ${y}l.5-${h}h.6l.6 ${h - 2} 1.600 2-1.600 1.500-.6 ${h - 1}h-.6z"/>`;
let L = `<rect x="684" y="73" width="526" height="7" fill="#96ab5a"/><rect x="684" y="80" width="526" height="8" fill="#6585a8"/><rect x="684" y="88" width="526" height="9" fill="#979797"/><rect x="684" y="97" width="526" height="10" fill="#8b8b8d"/><path d="M684 97.500h526M684 88.500h526" stroke="#666"/><rect x="684" y="107" width="526" height="65" fill="#777"/>`;
[[107, 17], [127, 18], [147, 18], [168, 4]].forEach(([y, h]) => L += `<rect x="684" y="${y}" width="526" height="${h}" fill="#9acb8e"/>`);
L += '<path d="M684 115.500h526M684 136h526M684 156.500h526" stroke="#4f7c4a" stroke-width=".6"/><g fill="#123f14">';
hits.forEach((x, i) => { const h = 6 + (i * 7 % 4); L += spike(x, 136, h) + spike(x, 156.5, h) + `<rect x="${x - .4}" y="168.500" width="1" height="3"/>`; });
[[686, 692], [776, 784], [786, 792], [793, 799], [802, 845], [845, 849], [855, 859], [881, 885], [887, 889], [893, 899], [903, 906], [925, 935], [938, 944], [948, 954], [970, 975], [979, 984], [990, 997], [1034, 1038], [1044, 1048], [1069, 1074], [1076, 1087], [1113, 1118], [1122, 1153], [1176, 1184], [1184, 1191]].forEach(([x, e]) => {
  if (e - x > 7) L += `<path d="M${x} 115.500H${e}" stroke="#123f14" stroke-width="2.600" stroke-dasharray="2 .8 1 .6"/>`;
  else L += `<path d="M${x} 113.500l2-1 ${e - x} 3-${e - x} 3-2-1z"/>`;
});
L += '</g>';
[[736, 'Inter'], [776, 'Verse2'], [964, 'Verse3'], [1172, 'Chorus2']].forEach(([x, t]) => L += `<rect x="${x}" y="91" width="4" height="4" fill="#f2c022"/><text x="${x + 5}" y="94.500">${t}</text>`);
[[855, '2/4'], [870, '4/4'], [890, '3/4'], [904, '4/4'], [1043, '2/4'], [1058, '4/4'], [1077, '3/4'], [1092, '4/4']].forEach(([x, t]) => L += `<path d="M${x} 82h4l-1 2h-2z" fill="#e3e84a"/><text x="${x + 4}" y="86">${t}</text>`);
$('lanes').innerHTML = L;

/* Mixer strips */
const slots = (cap, list = []) => `<div class="block"><div class="cap">${cap}</div>${[0, 1, 2, 3, 4].map(i => {
  const v = list[i];
  if (!v) return `<button class="slot" aria-label="${cap} ${i + 1}"></button>`;
  const [n, k = 'on'] = v.split('|');
  const cls = k === 'm' || k === 'hot' ? 'on' : k;
  return `<button class="slot ${cls}"><span>${n}</span>${k === 'm' ? '<em></em>' : k === 'hot' ? '<em class="hot"></em>' : ''}</button>`;
}).join('')}</div>`;
const knob = deg => `<svg viewBox="0 0 16 16"><circle cx="8" cy="8" r="7" fill="#b0b0b0"/><circle cx="8" cy="8" r="6.200" fill="#262626"/><circle cx="8" cy="8" r="4" fill="#b5b5b5" stroke="#111" stroke-width=".8"/><g transform="rotate(${deg} 8 8)"><path d="M8 3V8" stroke="#111" stroke-width="1.600"/><path d="M8 2V5" stroke="#fff" stroke-width="1"/><circle cx="8" cy="1" r="1" fill="#a4e01c"/></g></svg>`;
const fscale = [[12, 514], [6, 526], [0, 538], [5, 546.5], [10, 556], [15, 565], [20, 574], [30, 585], [40, 596], [60, 602], ['∞', 609]];
const mscale = [[0, 511], [3, 525], [6, 538], [10, 556], [14, 573.5], [22, 586], [32, 601], [60, 617]];
const faderArt = s => {
  const mx = 26, mw = s.mono ? 4 : 6;
  return `<svg viewBox="0 504 35 116">${fscale.map(([t, y]) => `<text x="5" y="${y + 1.5}" text-anchor="end">${t}</text>`).join('')}${mscale.map(([t, y]) => `<text x="23" y="${y + 1.5}" text-anchor="end">${t}</text>`).join('')}
<rect x="${mx}" y="507" width="${mw}" height="2" fill="#111"/><rect x="${mx}" y="511" width="${mw}" height="107" fill="url(#meter)"/><path d="M${mx + mw / 2} 511v107" stroke="#2d2d0c" stroke-width=".5"/>${s.gr ? `<rect x="${mx + mw + 1}" y="512" width="1.500" height="93" fill="${s.gr}"/>` : ''}</svg>`;
};
const volume = s => `<div class="vol"><div class="read"><span>${s.v[0]}</span><span class="${s.bl ? 'bl' : ''}">${s.v[1]}</span></div></div>
<div class="dyn">${s.first ? '' : '<span>⁚</span>'}${s.aux ? '<span>⇩</span>' : '<b>dyn</b><span>⊩</span>'}</div><div class="name ${s.sel ? 'sel' : ''}">${s.n}</div>`;
const delay = s => {
  const [d, o, c] = s.first ? ['y', '-', 'p'] : ['dly', '+/-', 'cmp'];
  return `<div class="dly ${s.hot ? 'hot' : ''}"><span>${d}</span><span>${s.d[0]}</span><span>${o}</span><span>0</span><span>${c}</span><span>${s.d[1]}</span></div>`;
};

const tails = [
  ['BGVM)11', '.8', '-80.5', 1, 693, 0], ['V(BGVM)11', '-8.2', '-80.5', 1, 693, 0], ['ChoComp', '+3.8', '-13.8', 0, 3193, 5276, 1], ['BGV_ChreD', '-4.8', '-21.7', 0, 2081, 3184, 1], ['V(BGLM)[H', '-2.5', '-88.1', 1, 661, 8506], ['V(BGLM)[H', '-3.6', '-87.0', 1, 661, 8506], ['Cho Dub', '-4.8', '-84.2', 1, 2049, 6454, 1], ['V(BGS)[L]1', '-7.8', '-4.3', 0, 0, 8167], ['V(BGS)[R]1', '-8.1', '-6.8', 0, 0, 8167], ['Vx(VrsHr)_1', '-2.0', '-4.2', 0, 2047, 6220], ['Vx(ChrH)_1', '-3.8', '-11.8', 0, 2079, 6188], ['Vx(VrsBLM)', '+0.5', '-17.8', 0, 5234, 3033], ['Vx(BrdH)_2', '-1.8', '-81.2', 1, 2047, 6220], ['Vx(BrdgHr)', '-1.8', '-81.3', 1, 2047, 6220], ['V(M)[M]_1L', '+1.8', '-7.9', 0, 2047, 6220], ['V(M)[V2P21', '+1.7', '-88.7', 1, 2047, 6220]
].map(([n, v, w, bl, d, c, aux], i) => ({ n, v: [v, w], bl, d: [d, c], aux, sel: i === 14, first: i === 0 }));

const G = '#2d4a12';
const full = [
  { n: 'V(M)[SC]_1', col: '#c8201a', ia: ['Pro-DS|m', 'UD T-Boost|dim', 'Pro-Q 3', '1176 A', 'bx_cnsl5|m'], ifj: ['Vari Mu', 'Trim'], sa: ['LVoDist|m', 'LVoPultec|m'], sf: ['LVo Eff2|m', '', 'LVo_Slap|m', 'Rev4|m'], io: ['no input', 'A 13'], touch: 1, rec: 1, f: 17, mono: 1, gr: '#6a3a28', v: ['-8.3', '-88.8'], bl: 1, d: [2047, 6220] },
  { n: 'LVo_Ef.dp1', ia: ['Doubler4'], io: ['LVo Eff2', 'A 11-12'], pan: ['◂24', '24▸', -45, 45], f: 32, v: ['-8.4', '-18.1'], d: [2049, 4169] },
  { n: 'LVo_Ef.dp2', ia: ['Reel ADT', 'Pro-Q 3|dim'], sf: ['LVo Eff2|dim'], io: ['LVo_Eff', 'A 11-12'], pan: ['◂38', '34▸', -60, 50], f: 32, v: ['-8.4', '-17.5'], d: [3930, 8] },
  { n: 'LVoDist', ia: ['bx_cnsl5|m', 'Devil-LcDis', '', '', 'Pro-G|hot'], io: ['LVoDist', 'A 13'], f: 29, mono: 1, gr: '#f09a18', v: ['-7.1', '-7.4'], d: [2112, 4105] },
  { n: 'LVoPultec', ia: ['EQP-1A', 'LA-2A S', 'EQP-1A'], sa: ['', '', '', 'LVo_Eff|dim'], io: ['LVoPultec', 'A 13'], f: 28, mono: 1, v: ['-6.8', '-18.3'], d: [5479, 738] },
  { n: 'LVo_Slap', ia: ['EchoBoy', 'EchoBoy|blue'], io: ['LVo_Slap', 'A 11-12'], pan: ['pan', '▸ 0 ◂', 0], f: 61, mono: 1, v: ['-27.7', '-14.4'], d: [2113, 4104] },
  { n: 'Rev1', ia: ['AMS RMX 2'], io: ['Rev1', 'A 9-10'], v: ['0.0', '-33.1'], d: [3137, 2832] },
  { n: 'Rev2', ia: ['AMS RMX 2'], io: ['Rev2', 'A 9-10'], v: ['0.0', '-17.6'], d: [3137, 1626] },
  { n: 'Rev3', ia: ['UAD Capitol', '', '', '', 'OxRing|dim'], io: ['Rev3', 'A 9-10'], v: ['0.0', '-108'], bl: 1, d: [3457, 5707] },
  { n: 'Rev4', ia: ['Lex 480L', '', '', '', 'bx_cnsl3|dim'], io: ['Rev4', 'A 9-10'], v: ['0.0', '-18.0'], d: [3256, 2711] },
  { n: 'Return', io: ['A 5-6', 'Router'], v: ['0.0', '-102'], bl: 1, d: [0, 0] },
  { n: 'Router', col: '#2f32f0', ia: ['Trim|dim', 'A 2-6|dim', 'UA 175-B|dim', 'ProAlt 670|dim', 'Vari Mu'], ifj: ['ATR-102|dim', 'StuderA800', 'SSL2BCMB', 'Ozone 9|dim', 'OxMMax'], io: ['Router', 'PRINT'], v: ['0.0', '-60.4'], d: [7327, 0], hot: 1 },
  { n: "PRINT_YD'S", col: '#1a3866', io: ['PRINT', 'A 1-2'], rec: 1, v: ['0.0', '-0.1'], d: [0, 8167] }
];
full.forEach((s, i) => { if (i > 5) s.pan = ['◂100', '100▸', -130, 130]; s.aux = i > 0 && i < 12; });

const tailHtml = s => `<div class="strip ${s.first ? 'first' : ''}"><div class="body tail"><svg viewBox="0 609 35 11" preserveAspectRatio="xMaxYMid slice"><circle cx="19" cy="617" r="2" fill="#aaa"/><text x="21" y="618" text-anchor="end">60</text><rect x="${s.aux ? 24 : 25}" y="609" width="${s.aux ? 6 : 4}" height="9" fill="#2f480c"/></svg>${volume(s)}</div>${delay(s)}</div>`;
const fullHtml = s => `<div class="strip"><div class="color" style="background:${s.col || G}"></div>
${slots('INSERTS A-E', s.ia)}${slots('INSERTS F-J', s.ifj)}${slots('SENDS A-E', s.sa)}${slots('SENDS F-J', s.sf)}
<div class="io"><div class="cap">I / O</div><button class="caret">${s.io[0]}</button><button class="caret">${s.io[1]}</button><div class="cap auto-cap">AUTO</div><button class="caret auto ${s.touch ? 'touch' : ''}">${s.touch ? 'auto t/trim' : 'auto read'}</button></div>
<div class="body"><div class="grp"><button class="caret">no group</button></div>
<div class="pan">${s.pan ? `<div class="knobs">${s.pan.slice(2).map(knob).join('')}</div><div class="read"><span>${s.pan[0]}</span><span>${s.pan[1]}</span></div>` : ''}</div>
<div class="rec">${s.rec ? '<button>I</button><button aria-label="Record">●</button>' : ''}</div><div class="sm"><button>S</button><button>M</button></div>
<div class="fader">${faderArt(s)}<input type="range" min="0" max="78" value="${78 - (s.f ?? 16)}" aria-label="${s.n} volume"></div>${volume(s)}</div>${delay(s)}</div>`;
$('strips').innerHTML = tails.map(tailHtml).join('') + full.map(fullHtml).join('');
document.body.insertAdjacentHTML('beforeend', '<svg width="0" height="0" style="position:absolute"><defs><linearGradient id="meter" x1="0" y1="0" x2="0" y2="1"><stop offset="0" stop-color="#5c3a1c"/><stop offset=".13" stop-color="#5a4416"/><stop offset=".15" stop-color="#5a5210"/><stop offset=".42" stop-color="#4c4a0e"/><stop offset=".5" stop-color="#33500e"/><stop offset="1" stop-color="#2e5a10"/></linearGradient><linearGradient id="blob" x1="0" y1="0" x2="0" y2="1"><stop offset="0" stop-color="#c4203a"/><stop offset=".16" stop-color="#d8443a"/><stop offset=".3" stop-color="#f2a045"/><stop offset=".5" stop-color="#fde9a0"/><stop offset=".7" stop-color="#f2a045"/><stop offset=".84" stop-color="#d8443a"/><stop offset="1" stop-color="#c4203a"/></linearGradient></defs></svg>');

/* Melodyne editor */
const names = 'Eb D Db C B Bb A Ab G Gb F E'.split(' ');
const rows = Array.from({ length: 27 }, (_, i) => names[i % 12]);
let oct = 5;
$('pitches').innerHTML = rows.map(n => `<span>${n === 'Db' ? `Db ${oct--}` : n}</span>`).join('');
$('bands').innerHTML = rows.map(n => `<i class="${n.length > 1 ? 'k' : ''}"></i>`).join('');
const bars = [195, 240, 285, 331, 376, 409, 455, 488, 534, 579, 624, 669];
$('ruler').innerHTML = '<rect x="649" y="110" width="25" height="14" fill="#bdbdbd"/><path d="M194 118.500h471v5" fill="none" stroke="#aaa"/>' + bars.map((x, i) => `<path d="M${x + .5} 114v10" stroke="#888"/>` + (i < 11 ? `<text x="${x + 2}" y="117">${16 + i}</text>` : '')).join('');
let N = '';
bars.forEach((x, i) => {
  N += `<path d="M${x + .5} 124v475" stroke="#c9c9c9"/>`;
  const e = bars[i + 1];
  if (e) for (let q = x + 11.3; q < e - 4; q += 11.3) N += `<path d="M${q} 124v475" stroke="#eee" stroke-width=".8"/>`;
});
const blobs = [
  [430, '194:1 197:6 198:9 200:6 202:1'], [398.5, '201.5:4 204:7 207:8 210:6 212:1'], [379, '210.5:3 213:6 217:7 221:5 222:2 225:0'],
  [343.5, '225:4 227:7 230:7 233:5 235:4 238:7 242:6'], [308.5, '242:6 243:7 252:6.500 260:7 268:6.500 276:7 277:5 278:2 281:0'], [431.5, '280.5:2 283:6 286:7 289:4 292:6 294:2'],
  [396.5, '293:4 295:7 298:5 302:4 306:3'], [377.5, '305.5:3 307:7 311:6.500 315:8 317:4'], [343.5, '316:6 318:9 320:5 322:2 324:0'],
  [311, '324:3 327:6 331:8 333:5 334:1'], [343.5, '337:5 340:7 344:6 346:1'], [377.5, '347.5:3 350:6 355:5 361:7 362:4'], [343.5, '361.5:5 363:7 367:6 370:7 371:3'],
  [376.5, '371:3 373:5 376:2 377:0'], [394, '377:3 380:6 384:5 387:3 389:5'], [378.5, '389:5 391:8 394:7 396:4'], [431, '395:5 397:7 399:5 402:8 405:4 406:1 409:0'],
  [343.5, '409.5:2 412:6 416:5 420:7 426:6 427:1 431:2 434:0'], [378.5, '433:5 436:7 443:7 446:5 449:1 454:1 455:1'], [378.5, '455:1 457:3 459:6 462:4 464:0'],
  [379, '467:3 470:7 473:7 474:3'], [431, '473.5:5 475:8 478:6 481:7 483:7 485:2 487:3 489:0'], [443.5, '462:1 464:5 466:2 467:0'], [464, '465:1 467:5 468:0'],
  [343.5, '489:4 493:5 497:7 502:7 503:2'], [343.5, '503:3 507:4 511:7 514:5 519:6 521:3'], [378.5, '520:4 523:6 526:3 529:2 531:3'], [378, '531:5 535:7 540:6 546:7 549:2 553:1 555:1'],
  [379, '555:2 559:7 563:5 565:3'], [343.5, '564:7 567:8 570:4 573:5 576:2'], [308.5, '576:6 577:7.500 595:7 613:7.500 614:3 616:0'], [430, '625:6 627:7 629:4 631:1'], [379, '631:4 633:6 637:4 640:7 648:7 649:6']
];
N += '<g fill="none" stroke="#bb6a58" stroke-width=".9">' + ['209.5 402 210.5 442', '220 384 222.500 433', '241.5 340 242.500 315', '273.5 315 274.500 345', '291 435 291.500 444', '301 400 303.500 477 306 380', '315 372 317 350', '327.5 331 330 318 333 330', '338 335 339.500 311 341 338', '345 350 345.500 365', '351 342 353.500 372', '361 372 362.500 350', '371 348 373 380 375 395', '378.5 358 380 380 381 388', '388.5 392 390 382', '394.5 384 395.500 428', '413 345 413.500 359.500', '458 382 456.500 411', '460 382 462 396', '473.5 385 474.500 430', '464.5 425 465 440 467 470', '489.5 488 491 350', '498 340 501 307.500 503 345', '508.5 306 511 345', '513 350 514.500 377 516 375', '525.5 380 526 395', '531 380 531.500 402', '558 398 559 380', '564.5 375 565 350', '575.5 310 575.500 317', '614 308.500 626 308.500', '625.5 440 631 425 632 396 635 396 637 385'].map(p => `<path d="M${p}"/>`).join('') + '</g>';
blobs.forEach(([y, s]) => {
  const p = s.split(' ').map(v => v.split(':').map(Number));
  const edge = [];
  for (let i = 0; i < p.length - 1; i++) {
    const [x0, h0] = p[i], [x1, h1] = p[i + 1];
    const n = Math.max(1, Math.round((x1 - x0) / 1.2));
    for (let k = 0; k < n; k++) { const t = k / n; edge.push([x0 + (x1 - x0) * t, Math.max(.5, h0 + (h1 - h0) * t + (k % 2 ? .5 : 0))]); }
  }
  edge.push(p[p.length - 1]);
  const up = edge.map(([x, h]) => `${x.toFixed(1)} ${(y - h).toFixed(1)}`);
  const dn = edge.slice().reverse().map(([x, h]) => `${x.toFixed(1)} ${(y + h).toFixed(1)}`);
  const inner = edge.filter((e, i) => i % 2 === 0 && e[1] > 2).map(([x], i) => `${x.toFixed(1)} ${(y + [0, -1.5, .8, 0, 1.2][i % 5]).toFixed(1)}`);
  N += `<path d="M${up.join('L')}L${dn.join('L')}z" fill="url(#blob)" stroke="#cc4a44" stroke-width=".7" stroke-linejoin="round"/><path d="M${inner.join('L')}" fill="none" stroke="#a3542c" stroke-width=".7"/>`;
});
$('notes').innerHTML = N;
```
